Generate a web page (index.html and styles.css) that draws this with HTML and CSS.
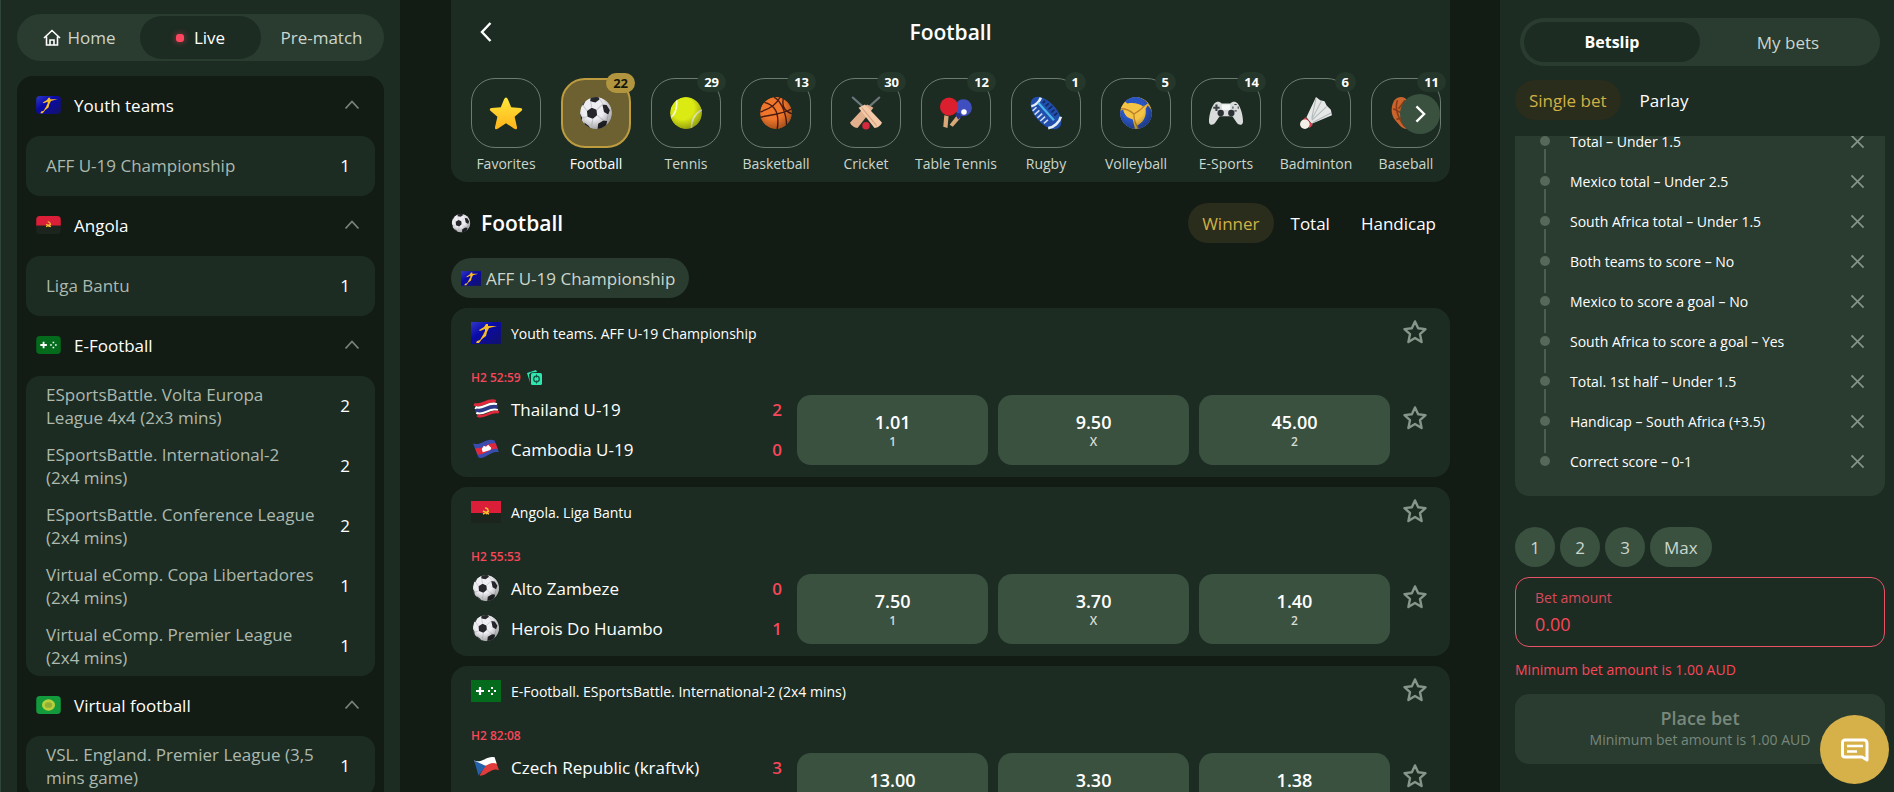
FILE: index.html
```html
<!DOCTYPE html>
<html lang="en">
<head>
<meta charset="UTF-8">
<meta name="viewport" content="width=device-width, initial-scale=1.0">
<title>Live Football</title>
<link rel="stylesheet" href="styles.css">
</head>
<body>

<!-- Shared icons -->
<svg class="sprite" aria-hidden="true">
  <defs>
    <radialGradient id="shade" cx="0.4" cy="0.35" r="0.7">
      <stop offset="0.5" stop-color="#000" stop-opacity="0"/>
      <stop offset="1" stop-color="#000" stop-opacity="0.35"/>
    </radialGradient>
    <linearGradient id="gold" x1="0" y1="0" x2="0" y2="1">
      <stop offset="0" stop-color="#ffe83a"/>
      <stop offset="1" stop-color="#ffb21a"/>
    </linearGradient>
    <linearGradient id="blue" x1="0" y1="0" x2="1" y2="1">
      <stop offset="0" stop-color="#3038c8"/>
      <stop offset="0.4" stop-color="#0a0aa8"/>
      <stop offset="1" stop-color="#12126a"/>
    </linearGradient>
    <clipPath id="ball"><circle cx="16" cy="16" r="15"/></clipPath>
  </defs>
  <symbol id="i-up" viewBox="0 0 16 16"><path d="M1.5 11.5 8 4.5l6.5 7" fill="none" stroke="currentColor" stroke-width="1.8"/></symbol>
  <symbol id="i-close" viewBox="0 0 16 16"><path d="M1.5 1.5l13 13M14.5 1.5l-13 13" fill="none" stroke="currentColor" stroke-width="1.8"/></symbol>
  <symbol id="i-star" viewBox="0 0 24 24"><path d="M12 2.2l2.9 6.3 6.8.8-5.1 4.6 1.5 7.4-6.1-3.7-6.1 3.7 1.5-7.4L2.3 9.3l6.8-.8z" fill="none" stroke="currentColor" stroke-width="2.2" stroke-linejoin="round"/></symbol>
  <symbol id="i-favorite" viewBox="0 0 32 32"><path d="M16 1.5c.8 0 1.5.9 2.2 2.5l2.7 6.5 8.6.8c2 .2 2.3 1.6.9 2.8l-6.3 5.4 2.2 9.6c.4 2-.9 2.8-2.5 1.8L16 25.6l-7.8 5.3c-1.6 1-2.9.2-2.5-1.8l2.2-9.6-6.3-5.4c-1.4-1.2-1.1-2.6.9-2.8l8.6-.8L13.800 4c.7-1.6 1.4-2.5 2.2-2.5z" fill="url(#gold)"/></symbol>
  <symbol id="i-football" viewBox="0 0 32 32">
    <g clip-path="url(#ball)">
      <circle cx="16" cy="16" r="15" fill="#eeeef2"/>
      <path d="M7.5 14l4.5-3 4.5 2 .5 5-4 3.5-5-2zM11 1l7-.5 1.5 2.5-4 3-5-1zM22 8l4 .5 3 5-1.5 4-4-2.5zM18 26l5-3 3.5.5-1 4.500-5 3.500h-3zM0 15l3 5.500-.5 4L0 22zM5 25l4 3 3 4H6zM1 8l3-4 2 1-2 4z" fill="#25272b"/>
      <path d="M12 11l-1-6M16.5 13L22 8M17 18l6 5M13 21.5l-1 6M7.5 19.5L3 20.5M7.5 14L4 9M19.5 3L23 8M26 23.5l1.5-6" stroke="#c9cad0" fill="none"/>
      <circle cx="16" cy="16" r="15" fill="url(#shade)"/>
    </g>
  </symbol>
  <symbol id="i-tennis" viewBox="0 0 32 32">
    <g clip-path="url(#ball)">
      <circle cx="16" cy="16" r="15" fill="#dcea14"/>
      <path d="M7 3c1 8 0 13-5 17M31 13c-6 3-10 9-10 18" stroke="#f6fbd0" stroke-width="1.6" fill="none"/>
      <circle cx="16" cy="16" r="15" fill="url(#shade)"/>
    </g>
  </symbol>
  <symbol id="i-basketball" viewBox="0 0 32 32">
    <g clip-path="url(#ball)">
      <circle cx="16" cy="16" r="15" fill="#f0762b"/>
      <path d="M1 20C10 18 22 17 31 12M14 1c6 3 12 14 12 28M5 6c9 2 15 9 12 26M23 2c-2 8 2 13 9 15M1 15C8 13 16 9 20 1" stroke="#4c1c12" stroke-width="1.3" fill="none"/>
      <circle cx="16" cy="16" r="15" fill="url(#shade)"/>
    </g>
  </symbol>
  <symbol id="i-cricket" viewBox="0 0 32 32">
    <path d="M3 1l10 9M29 1L19 10" stroke="#6d777c" stroke-width="2"/>
    <path d="M17 8l6 3L8 30c-3 0-6-2-7-5z" fill="#e3b08e"/>
    <path d="M15 8l-6 3 15 19c3 0 6-2 7-5z" fill="#f3c9a8"/>
    <path d="M12 11l14 17" stroke="#d39f80"/>
    <circle cx="16" cy="28" r="3.5" fill="#d6283f"/>
  </symbol>
  <symbol id="i-tabletennis" viewBox="0 0 32 32">
    <path d="M5 18l4 1-1 11-4-1zM17 18l3 3-7 8-3-2z" fill="#d9a878"/>
    <circle cx="23" cy="11" r="8" fill="#3f4fc0"/>
    <path d="M15 17l5-1 1 4-3 2z" fill="#27338f"/>
    <circle cx="9.5" cy="10" r="8.6" fill="#dc1f2e"/>
    <circle cx="23.5" cy="15" r="2.6" fill="#fff"/>
  </symbol>
  <symbol id="i-rugby" viewBox="0 0 32 32">
    <g transform="rotate(48 16 16)">
      <ellipse cx="16" cy="16" rx="18.5" ry="10" fill="#214fae"/>
      <path d="M2 10c2 3 2 9 0 12M28 8c3 4 3 12 0 16" stroke="#e4edf8" stroke-width="2.5" fill="none"/>
      <path d="M4 15h22" stroke="#49b6e8" stroke-width="2"/>
      <path d="M6 19v5M10 19v6M14 19v6M18 19v6M22 19v5" stroke="#cfdcf0" stroke-width="1.5"/>
      <path d="M7 9v3M11 8v4M15 7v5M19 8v4M23 8v4" stroke="#12285f" stroke-width="1.5"/>
    </g>
  </symbol>
  <symbol id="i-volleyball" viewBox="0 0 32 32">
    <g clip-path="url(#ball)">
      <circle cx="16" cy="16" r="15" fill="#f6c445"/>
      <path d="M10 0c8 0 15 3 17 7l-4 3C19 7 14 6 8 7L5 5z" fill="#2a55c4"/>
      <path d="M0 14l4-1c1 5 4 8 9 9l2 9C7 31 0 24 0 14z" fill="#2a55c4"/>
      <path d="M27 9c4 4 6 9 4 14-3 5-7 7-13 8l-1-3c7-4 9-10 8-16z" fill="#2a55c4"/>
      <path d="M14 17c3-2 7-4 10-8M14 17C10 13 6 12 2 12M14 17c0 5 1 9 4 13" stroke="#b8802a" stroke-width="1.2" fill="none"/>
      <circle cx="16" cy="16" r="15" fill="url(#shade)"/>
    </g>
  </symbol>
  <symbol id="i-esports" viewBox="0 0 32 32">
    <path d="M5 7c2-2 5-2 7 0h8c2-2 5-2 7 0 3 4 5 11 5 17 0 4-4 4-6 1l-4-6H10l-4 6c-2 3-6 3-6-1 0-6 2-13 5-17z" fill="#d9dcdb"/>
    <path d="M12 8h8v5h-8z" fill="#f7f8f8"/>
    <circle cx="11" cy="16" r="3" fill="#2b3034"/><circle cx="21" cy="16" r="3" fill="#2b3034"/>
    <path d="M7 8v6M4 11h6" stroke="#3b4247" stroke-width="2"/>
    <path d="M25 7.5v1M25 13.5v1M22 11h1M27 11h1" stroke="#3b4247" stroke-width="2.2"/>
  </symbol>
  <symbol id="i-badminton" viewBox="0 0 32 32">
    <path d="M16 1l4 3 4 1 2 4 4 4 1 5-19 8-5-6z" fill="#e6e8e8"/>
    <path d="M16 2l-4 19M21 5l-9 17M26 10L12 23M30 16l-17 9" stroke="#b4b9ba"/>
    <path d="M6 20l7 7-3 3-7-7z" fill="#dc4455"/>
    <circle cx="5.5" cy="26.5" r="4.5" fill="#f4f0e6"/>
  </symbol>
  <symbol id="i-baseball" viewBox="0 0 32 32">
    <path d="M5 4c4-4 9-4 12 0l6-1c5 2 8 8 7 16-2 8-8 11-14 12-5-1-7-5-10-8C1 17 2 9 5 4z" fill="#c9652c"/>
    <path d="M8 4c-3 8 0 16 7 25M15 4l-6 8M4 12l8 4M7 22l7-2" stroke="#8d3b17" stroke-width="1.5" fill="none"/>
    <circle cx="20" cy="16" r="6" fill="#ece8e0"/>
  </symbol>
  <symbol id="f-youth" viewBox="0 0 30 22">
    <path d="M0 0h30v22H0z" fill="url(#blue)"/>
    <path d="M26 4l-8 2-2 4-1 4-4 3-3 4-3 0 1-2 3-1 3-5 2-4 0-2-5 2-1-1 5-3 2-3 2 0 0 2 4 0z" fill="#f6bd25"/>
  </symbol>
  <symbol id="f-angola" viewBox="0 0 30 22">
    <path d="M0 0h30v12H0z" fill="#dc1f39"/><path d="M0 12h30v10H0z" fill="#1b251e"/>
    <path d="M14 7c4 0 4 5 1 6M12 13l6-3M12 10l6 3" stroke="#f0c030" stroke-width="1.4" fill="none"/>
  </symbol>
  <symbol id="f-efootball" viewBox="0 0 30 22">
    <path d="M0 0h30v22H0z" fill="#046a1c"/>
    <path d="M9 7v8M5 11h8" stroke="#fff" stroke-width="2.2"/>
    <path d="M21 7v2M21 13v2M17 11h2M23 11h2" stroke="#fff" stroke-width="2"/>
  </symbol>
  <symbol id="f-virtual" viewBox="0 0 30 22">
    <path d="M0 0h30v22H0z" fill="#129a3c"/>
    <ellipse cx="15" cy="11" rx="8" ry="7" fill="#b8cf3c"/><ellipse cx="15" cy="11" rx="4.5" ry="3.5" fill="#8fb035"/>
  </symbol>
  <symbol id="f-thailand" viewBox="0 0 26 20">
    <g fill="none" stroke-width="3">
      <path d="M2 5.5C9 9 14 0 22 3" stroke="#e0283c"/>
      <path d="M3 8.5C10 12 15 3 23 6" stroke="#fff"/>
      <path d="M3.5 11C10.5 14.5 15.5 5.5 23.5 8.5" stroke="#2b3a86" stroke-width="4"/>
      <path d="M4 13.5C11 17 16 8 24 11" stroke="#fff" stroke-width="2"/>
      <path d="M5 16C12 19.5 17 10.5 25 13" stroke="#e0283c" stroke-width="2.5"/>
    </g>
  </symbol>
  <symbol id="f-cambodia" viewBox="0 0 26 20">
    <path d="M1 5c8 2 12-6 20-3l4 11c-8-2-12 7-19 5z" fill="#3a4cae"/>
    <path d="M3 9c7 2 12-6 19-4l2 5c-7-2-12 6-19 5z" fill="#e0283c"/>
    <path d="M9 10l2-3 2 1 2-2 3 3-1 2-7 2z" fill="#fff"/>
  </symbol>
  <symbol id="f-czech" viewBox="0 0 26 20">
    <path d="M2 4c7 3 12-5 19-3l2 6-17 5z" fill="#fff"/>
    <path d="M12 9c4-2 7-4 11-2l2 6c-7-3-12 6-18 5z" fill="#e23b3b"/>
    <path d="M2 4l11 5-7 9z" fill="#2561a8"/>
  </symbol>
</svg>

<div class="layout">

  <aside class="sidebar">
    <nav class="switch">
      <a href="#home"><svg class="home" viewBox="0 0 18 18"><path d="M1 9l8-7.5L17 9M3.5 7.5V16h11V7.5M7 16v-5h4v5" fill="none" stroke="currentColor" stroke-width="1.6"/></svg>Home</a>
      <a href="#live" class="active"><span class="live-dot"></span>Live</a>
      <a href="#prematch">Pre-match</a>
    </nav>

    <div class="groups">
      <button class="group-head"><svg class="flag"><use href="#f-youth"/></svg>Youth teams<svg class="arrow"><use href="#i-up"/></svg></button>
      <div class="group-list">
        <a href="#l1"><span>AFF U-19 Championship</span><b>1</b></a>
      </div>
      <button class="group-head"><svg class="flag"><use href="#f-angola"/></svg>Angola<svg class="arrow"><use href="#i-up"/></svg></button>
      <div class="group-list">
        <a href="#l2"><span>Liga Bantu</span><b>1</b></a>
      </div>
      <button class="group-head"><svg class="flag"><use href="#f-efootball"/></svg>E-Football<svg class="arrow"><use href="#i-up"/></svg></button>
      <div class="group-list">
        <a href="#l3"><span>ESportsBattle. Volta Europa League 4x4 (2x3 mins)</span><b>2</b></a>
        <a href="#l4"><span>ESportsBattle. International-2 (2x4 mins)</span><b>2</b></a>
        <a href="#l5"><span>ESportsBattle. Conference League (2x4 mins)</span><b>2</b></a>
        <a href="#l6"><span>Virtual eComp. Copa Libertadores (2x4 mins)</span><b>1</b></a>
        <a href="#l7"><span>Virtual eComp. Premier League (2x4 mins)</span><b>1</b></a>
      </div>
      <button class="group-head"><svg class="flag"><use href="#f-virtual"/></svg>Virtual football<svg class="arrow"><use href="#i-up"/></svg></button>
      <div class="group-list">
        <a href="#l8"><span>VSL. England. Premier League (3,5 mins game)</span><b>1</b></a>
      </div>
    </div>
  </aside>

  <main class="content">
    <header class="top">
      <div class="top-title">
        <button class="back" aria-label="Back"><svg viewBox="0 0 12 20"><path d="M10.5 1L2 10l8.5 9" fill="none" stroke="currentColor" stroke-width="2.4"/></svg></button>
        <h1>Football</h1>
      </div>
      <nav class="sports">
        <a href="#favorites"><span class="tile"><svg><use href="#i-favorite"/></svg></span>Favorites</a>
        <a href="#football" class="active"><span class="tile"><svg><use href="#i-football"/></svg><i>22</i></span>Football</a>
        <a href="#tennis"><span class="tile"><svg><use href="#i-tennis"/></svg><i>29</i></span>Tennis</a>
        <a href="#basketball"><span class="tile"><svg><use href="#i-basketball"/></svg><i>13</i></span>Basketball</a>
        <a href="#cricket"><span class="tile"><svg><use href="#i-cricket"/></svg><i>30</i></span>Cricket</a>
        <a href="#tabletennis"><span class="tile"><svg><use href="#i-tabletennis"/></svg><i>12</i></span>Table Tennis</a>
        <a href="#rugby"><span class="tile"><svg><use href="#i-rugby"/></svg><i>1</i></span>Rugby</a>
        <a href="#volleyball"><span class="tile"><svg><use href="#i-volleyball"/></svg><i>5</i></span>Volleyball</a>
        <a href="#esports"><span class="tile"><svg><use href="#i-esports"/></svg><i>14</i></span>E-Sports</a>
        <a href="#badminton"><span class="tile"><svg><use href="#i-badminton"/></svg><i>6</i></span>Badminton</a>
        <a href="#baseball"><span class="tile"><svg><use href="#i-baseball"/></svg><i>11</i></span>Baseball</a>
      </nav>
      <button class="next" aria-label="Next sports"><svg viewBox="0 0 12 20"><path d="M1.5 1.5L10 10l-8.5 8.5" fill="none" stroke="currentColor" stroke-width="2.6"/></svg></button>
    </header>

    <div class="section-head">
      <svg class="section-icon"><use href="#i-football"/></svg>
      <h2>Football</h2>
      <div class="pills">
        <button class="active">Winner</button>
        <button>Total</button>
        <button>Handicap</button>
      </div>
    </div>

    <a href="#aff" class="chip"><svg><use href="#f-youth"/></svg>AFF U-19 Championship</a>

    <section class="card">
      <div class="card-head">
        <svg class="card-flag"><use href="#f-youth"/></svg>
        <h3>Youth teams. AFF U-19 Championship</h3>
        <button class="star" aria-label="Add league to favorites"><svg><use href="#i-star"/></svg></button>
      </div>
      <div class="event">
        <div class="info">
          <div class="time">H2 52:59
            <svg viewBox="0 0 15 15"><path d="M0 3l9-3 1 2-6 .5-2 2 1 8z" fill="#2ee6b0"/><rect x="4" y="3" width="11" height="12" rx="1.5" fill="#2ee6b0"/><circle cx="9.5" cy="9" r="2.8" fill="none" stroke="#14563f" stroke-width="1.3"/><path d="M9.5 4.5v3M9.5 10.5v3" stroke="#14563f"/></svg>
          </div>
          <div class="team"><svg class="wave"><use href="#f-thailand"/></svg>Thailand U-19<b>2</b></div>
          <div class="team"><svg class="wave"><use href="#f-cambodia"/></svg>Cambodia U-19<b>0</b></div>
        </div>
        <div class="odds">
          <button>1.01<small>1</small></button>
          <button>9.50<small>X</small></button>
          <button>45.00<small>2</small></button>
        </div>
        <button class="star" aria-label="Add match to favorites"><svg><use href="#i-star"/></svg></button>
      </div>
    </section>

    <section class="card">
      <div class="card-head">
        <svg class="card-flag"><use href="#f-angola"/></svg>
        <h3>Angola. Liga Bantu</h3>
        <button class="star" aria-label="Add league to favorites"><svg><use href="#i-star"/></svg></button>
      </div>
      <div class="event">
        <div class="info">
          <div class="time">H2 55:53</div>
          <div class="team"><svg><use href="#i-football"/></svg>Alto Zambeze<b>0</b></div>
          <div class="team"><svg><use href="#i-football"/></svg>Herois Do Huambo<b>1</b></div>
        </div>
        <div class="odds">
          <button>7.50<small>1</small></button>
          <button>3.70<small>X</small></button>
          <button>1.40<small>2</small></button>
        </div>
        <button class="star" aria-label="Add match to favorites"><svg><use href="#i-star"/></svg></button>
      </div>
    </section>

    <section class="card">
      <div class="card-head">
        <svg class="card-flag"><use href="#f-efootball"/></svg>
        <h3>E-Football. ESportsBattle. International-2 (2x4 mins)</h3>
        <button class="star" aria-label="Add league to favorites"><svg><use href="#i-star"/></svg></button>
      </div>
      <div class="event">
        <div class="info">
          <div class="time">H2 82:08</div>
          <div class="team"><svg class="wave"><use href="#f-czech"/></svg>Czech Republic (kraftvk)<b>3</b></div>
          <div class="team"></div>
        </div>
        <div class="odds">
          <button>13.00<small>1</small></button>
          <button>3.30<small>X</small></button>
          <button>1.38<small>2</small></button>
        </div>
        <button class="star" aria-label="Add match to favorites"><svg><use href="#i-star"/></svg></button>
      </div>
    </section>
  </main>

  <aside class="betslip">
    <div class="slip-switch">
      <button class="active">Betslip</button>
      <button>My bets</button>
    </div>
    <div class="pills slip-pills">
      <button class="active">Single bet</button>
      <button>Parlay</button>
    </div>

    <div class="slip-scroll">
      <ul class="legs">
        <li>Total – Under 1.5<button aria-label="Remove"><svg><use href="#i-close"/></svg></button></li>
        <li>Mexico total – Under 2.5<button aria-label="Remove"><svg><use href="#i-close"/></svg></button></li>
        <li>South Africa total – Under 1.5<button aria-label="Remove"><svg><use href="#i-close"/></svg></button></li>
        <li>Both teams to score – No<button aria-label="Remove"><svg><use href="#i-close"/></svg></button></li>
        <li>Mexico to score a goal – No<button aria-label="Remove"><svg><use href="#i-close"/></svg></button></li>
        <li>South Africa to score a goal – Yes<button aria-label="Remove"><svg><use href="#i-close"/></svg></button></li>
        <li>Total. 1st half – Under 1.5<button aria-label="Remove"><svg><use href="#i-close"/></svg></button></li>
        <li>Handicap – South Africa (+3.5)<button aria-label="Remove"><svg><use href="#i-close"/></svg></button></li>
        <li>Correct score – 0-1<button aria-label="Remove"><svg><use href="#i-close"/></svg></button></li>
      </ul>
    </div>

    <form class="stake" onsubmit="return false">
      <div class="quick">
        <button type="button">1</button>
        <button type="button">2</button>
        <button type="button">3</button>
        <button type="button">Max</button>
      </div>
      <div class="amount">
        <label for="amount">Bet amount</label>
        <input id="amount" type="text" value="0.00">
      </div>
      <p class="error">Minimum bet amount is 1.00 AUD</p>
      <button class="place" disabled>Place bet<small>Minimum bet amount is 1.00 AUD</small></button>
    </form>
  </aside>

</div>

<button class="chat" aria-label="Open chat"><svg viewBox="0 0 28 24"><path d="M4 2h19a3 3 0 0 1 3 3v17l-5-3H4a2.5 2.5 0 0 1-2.5-2.5V4.5A2.5 2.5 0 0 1 4 2z" fill="none" stroke="#fff" stroke-width="3" stroke-linejoin="round"/><path d="M6 8h16M6 13.5h10" stroke="#fff" stroke-width="2.6"/></svg></button>

</body>
</html>
```
FILE: styles.css
```css
* {
  box-sizing: border-box;
}
body {
  margin: 0;
  background-color: #121b14;
  color: #fff;
  font-family: "Segoe UI", "Open Sans", "Noto Sans", sans-serif;
  font-size: 17px;
  line-height: 23px;
}
a {
  color: inherit;
  text-decoration: none;
}
button {
  padding: 0;
  border: none;
  background: none;
  color: inherit;
  font: inherit;
  cursor: pointer;
}
svg {
  display: block;
  flex: none;
}
h1, h2, h3, p, ul {
  margin: 0;
  padding: 0;
}
.sprite {
  position: absolute;
  width: 0;
  height: 0;
}
.layout {
  display: flex;
  height: 100vh;
  overflow: hidden;
}

/* left column */
.sidebar {
  display: flex;
  flex-direction: column;
  flex: 0 0 400px;
  padding: 14px 16px 0;
  background-color: #1c2c22;
  border-left: 1px solid #33463a;
}
.switch {
  display: flex;
  flex: none;
  height: 47px;
  padding: 2px;
  border-radius: 24px;
  background-color: #2a3b30;
  color: #cbd6cd;
}
.switch a {
  display: flex;
  flex: 1;
  align-items: center;
  justify-content: center;
  gap: 6px;
  border-radius: 22px;
}
.switch .active {
  gap: 10px;
  background-color: #1c2c22;
  color: #fff;
}
.home {
  width: 18px;
  height: 18px;
  color: #fff;
}
.live-dot {
  width: 8px;
  height: 8px;
  border-radius: 3px;
  background-color: #ff4660;
  box-shadow: 0 0 6px #ff466099;
}
.groups {
  flex: 1;
  min-height: 0;
  margin-top: 15px;
  padding: 0 9px;
  border-radius: 16px 16px 0 0;
  background-color: #121b14;
  overflow: hidden;
}
.group-head {
  display: flex;
  align-items: center;
  gap: 13px;
  width: 100%;
  height: 60px;
  padding: 0 15px 2px 10px;
}
.flag {
  width: 25px;
  height: 18px;
  border-radius: 4px;
}
.arrow {
  width: 16px;
  height: 16px;
  margin-left: auto;
  color: #79827b;
}
.group-list {
  border-radius: 14px;
  background-color: #1c2c22;
}
.group-list a {
  display: flex;
  align-items: center;
  height: 60px;
  padding: 0 20px 1px;
  color: #adb9af;
}
.group-list span {
  flex: 1;
  padding-right: 18px;
}
.group-list b {
  width: 20px;
  color: #fff;
  font-weight: 400;
  text-align: center;
}

/* middle column */
.content {
  flex: 1;
  min-width: 0;
  padding: 0 50px 0 51px;
}
.top {
  position: relative;
  border-radius: 0 0 16px 16px;
  background-color: #1c2c22;
}
.top-title {
  display: flex;
  align-items: center;
  height: 64px;
  padding: 0 29px;
}
.back svg {
  width: 12px;
  height: 20px;
}
h1, h2 {
  font-size: 21px;
  font-weight: 600;
}
h1 {
  flex: 1;
  padding-right: 12px;
  text-align: center;
}
.sports {
  display: flex;
  padding: 14px 0 8px 10px;
  overflow: hidden;
}
.sports a {
  display: flex;
  flex: 0 0 90px;
  flex-direction: column;
  align-items: center;
  gap: 6px;
  color: #cbd6cd;
  font-size: 14px;
  line-height: 20px;
  white-space: nowrap;
}
.tile {
  position: relative;
  display: flex;
  align-items: center;
  justify-content: center;
  width: 70px;
  height: 70px;
  border: 1px solid #6d7c70;
  border-radius: 24px;
}
.tile svg {
  width: 34px;
  height: 34px;
}
.tile i {
  position: absolute;
  top: -7px;
  right: -6px;
  padding: 0 7px;
  border-radius: 10px;
  background-color: #25362b;
  color: #fff;
  font-size: 13px;
  font-style: normal;
  font-weight: 700;
}
.sports .active {
  color: #fff;
}
.active .tile {
  border: 2px solid #bd9c40;
  background-color: #6d6132;
}
.active .tile i {
  background-color: #b2963f;
  color: #16160c;
}
.next {
  position: absolute;
  right: 10px;
  bottom: 48px;
  display: flex;
  align-items: center;
  justify-content: center;
  width: 40px;
  height: 40px;
  border-radius: 50%;
  background-color: #3a5140;
}
.next svg {
  width: 11px;
  height: 18px;
}
.section-head {
  display: flex;
  align-items: center;
  margin: 21px 0 15px;
}
.section-icon {
  width: 20px;
  height: 20px;
  margin-right: 10px;
}
.pills {
  display: flex;
  gap: 3px;
  margin-left: auto;
}
.pills button {
  height: 40px;
  padding: 0 14px;
  border-radius: 20px;
}
.pills .active {
  background-color: #2a2c1c;
  color: #d0b145;
}
.chip {
  display: inline-flex;
  align-items: center;
  gap: 5px;
  height: 40px;
  padding: 0 14px 0 10px;
  border-radius: 20px;
  background-color: #2a3b30;
  color: #cbd6cd;
  vertical-align: top;
}
.chip svg {
  width: 20px;
  height: 15px;
}
.card {
  margin-top: 10px;
  padding: 0 10px 8px 20px;
  border-radius: 16px;
  background-color: #1c2c22;
}
.card-head {
  display: flex;
  align-items: center;
  gap: 10px;
  height: 50px;
}
.card-flag {
  width: 30px;
  height: 22px;
}
h3 {
  flex: 1;
  font-size: 14px;
  font-weight: 400;
}
.star {
  display: flex;
  align-items: center;
  justify-content: center;
  width: 50px;
  padding-bottom: 2px;
  color: #87958a;
}
.star svg {
  width: 26px;
  height: 26px;
}
.event {
  display: grid;
  grid-template-columns: minmax(0, 11fr) minmax(0, 20fr) 50px;
  padding-top: 10px;
}
.info {
  padding-right: 10px;
}
.time {
  display: flex;
  align-items: center;
  gap: 6px;
  height: 21px;
  padding-bottom: 2px;
  color: #f8465a;
  font-size: 12px;
  font-weight: 600;
}
.time svg {
  width: 15px;
  height: 15px;
}
.team {
  display: flex;
  align-items: center;
  height: 40px;
}
.team svg {
  width: 28px;
  height: 28px;
  margin: 0 11px 0 1px;
}
.team .wave {
  height: 22px;
}
.team b {
  width: 20px;
  margin-left: auto;
  color: #f8465a;
  font-weight: 600;
  text-align: center;
}
.odds {
  display: grid;
  grid-template-columns: repeat(3, 1fr);
  align-self: end;
  gap: 10px;
  padding-bottom: 4px;
}
.odds button {
  height: 70px;
  border-radius: 14px;
  background-color: #3a5140;
  font-size: 18px;
  font-weight: 600;
}
.odds small {
  display: block;
  color: #d4ddd6;
  font-size: 12px;
  line-height: 16px;
}

/* right column */
.betslip {
  display: flex;
  flex-direction: column;
  flex: 0 0 394px;
  padding: 18px 9px 28px 15px;
  background-color: #1c2c22;
}
.slip-switch {
  display: grid;
  grid-template-columns: 1fr 1fr;
  height: 48px;
  margin: 0 5px;
  padding: 4px;
  border-radius: 24px;
  background-color: #2a3b30;
  color: #cbd6cd;
}
.slip-switch button {
  border-radius: 20px;
}
.slip-switch .active {
  background-color: #1c2c22;
  color: #fff;
  font-size: 16px;
  font-weight: 700;
}
.slip-pills {
  gap: 5px;
  margin: 14px 0 16px;
}
.slip-scroll {
  display: flex;
  flex: 1;
  flex-direction: column;
  justify-content: flex-end;
  min-height: 0;
  margin-bottom: 31px;
  overflow: hidden;
}
.legs {
  padding: 0 20px 15px;
  border-radius: 14px;
  background-color: #2a3b30;
  font-size: 14px;
  list-style: none;
}
.legs li {
  position: relative;
  display: flex;
  align-items: center;
  height: 40px;
  padding-left: 35px;
}
.legs li::before {
  content: "";
  position: absolute;
  left: 5px;
  width: 10px;
  height: 10px;
  border-radius: 50%;
  background-color: #566859;
}
.legs li + li::after {
  content: "";
  position: absolute;
  top: -12px;
  left: 9px;
  width: 2px;
  height: 24px;
  background-color: #4c5e51;
}
.legs button {
  margin-left: auto;
  color: #87958a;
}
.legs svg {
  width: 15px;
  height: 15px;
}
.quick {
  display: flex;
  gap: 5px;
}
.quick button {
  min-width: 40px;
  height: 40px;
  padding: 0 14px;
  border-radius: 20px;
  background-color: #3a5140;
  color: #cbd6cd;
}
.amount {
  display: flex;
  flex-direction: column;
  height: 70px;
  margin-top: 10px;
  padding: 8px 19px;
  border: 1px solid #e85266;
  border-radius: 14px;
}
.amount label {
  color: #d9485b;
  font-size: 14px;
}
.amount input {
  width: 100%;
  height: 32px;
  padding: 0;
  border: none;
  outline: none;
  background: none;
  color: #f8465a;
  font: inherit;
  font-size: 18px;
}
.error {
  margin: 11px 0 13px;
  color: #f8465a;
  font-size: 14px;
}
.place {
  width: 100%;
  height: 70px;
  border-radius: 14px;
  background-color: #2a3b30;
  color: #78887c;
  font-size: 18px;
  font-weight: 600;
  line-height: 22px;
}
.place small {
  display: block;
  font-size: 14px;
  font-weight: 400;
}
.chat {
  position: fixed;
  right: 5px;
  bottom: 8px;
  display: flex;
  align-items: center;
  justify-content: center;
  width: 69px;
  height: 69px;
  border-radius: 50%;
  background-color: #d6b14a;
}
.chat svg {
  width: 28px;
  height: 24px;
}
```
